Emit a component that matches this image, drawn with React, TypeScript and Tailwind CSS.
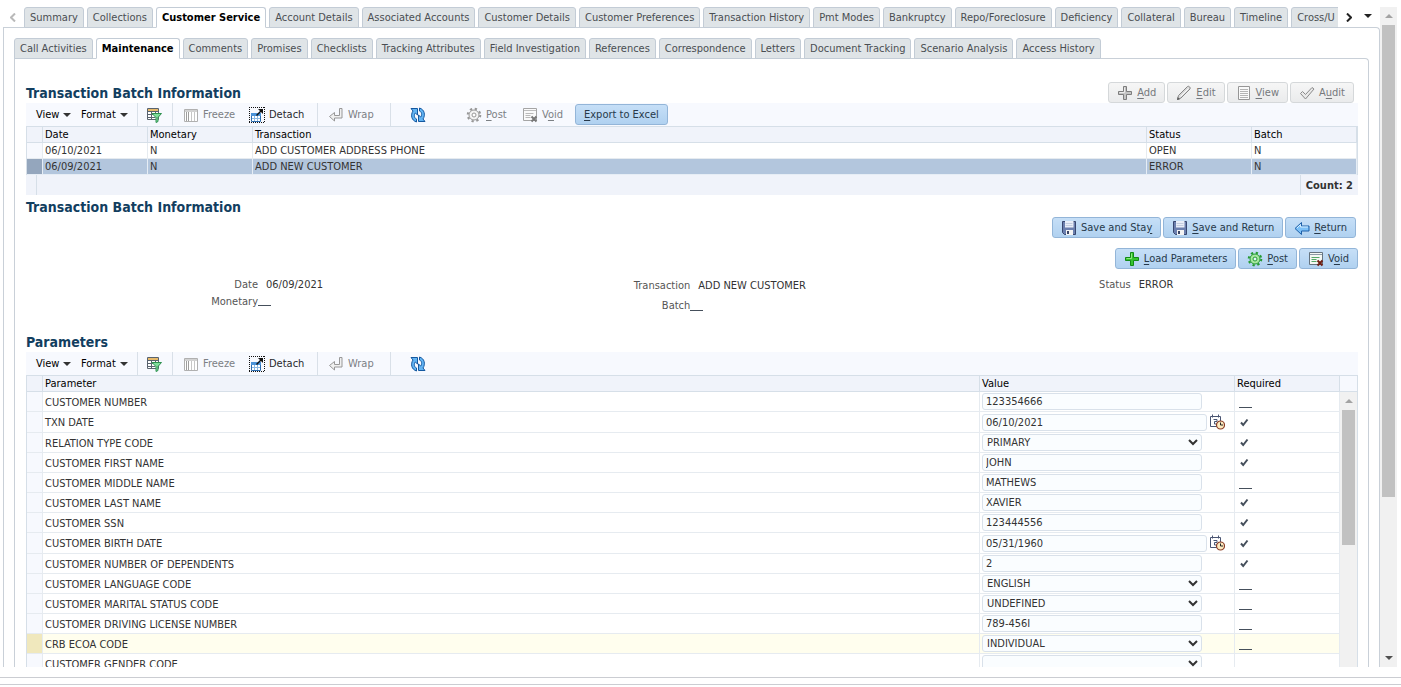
import { ReactNode } from 'react';
import { clsx } from 'clsx';

const mainTabs = [
  'Summary',
  'Collections',
  'Customer Service',
  'Account Details',
  'Associated Accounts',
  'Customer Details',
  'Customer Preferences',
  'Transaction History',
  'Pmt Modes',
  'Bankruptcy',
  'Repo/Foreclosure',
  'Deficiency',
  'Collateral',
  'Bureau',
  'Timeline',
  'Cross/U',
];

const subTabs = [
  'Call Activities',
  'Maintenance',
  'Comments',
  'Promises',
  'Checklists',
  'Tracking Attributes',
  'Field Investigation',
  'References',
  'Correspondence',
  'Letters',
  'Document Tracking',
  'Scenario Analysis',
  'Access History',
];

const batches = [
  { date: '06/10/2021', monetary: 'N', transaction: 'ADD CUSTOMER ADDRESS PHONE', status: 'OPEN', batch: 'N' },
  { date: '06/09/2021', monetary: 'N', transaction: 'ADD NEW CUSTOMER', status: 'ERROR', batch: 'N' },
];

interface Parameter {
  name: string;
  value: string;
  kind: 'text' | 'date' | 'select';
  required: boolean;
}

const parameters: Parameter[] = [
  { name: 'CUSTOMER NUMBER', value: '123354666', kind: 'text', required: false },
  { name: 'TXN DATE', value: '06/10/2021', kind: 'date', required: true },
  { name: 'RELATION TYPE CODE', value: 'PRIMARY', kind: 'select', required: true },
  { name: 'CUSTOMER FIRST NAME', value: 'JOHN', kind: 'text', required: true },
  { name: 'CUSTOMER MIDDLE NAME', value: 'MATHEWS', kind: 'text', required: false },
  { name: 'CUSTOMER LAST NAME', value: 'XAVIER', kind: 'text', required: true },
  { name: 'CUSTOMER SSN', value: '123444556', kind: 'text', required: true },
  { name: 'CUSTOMER BIRTH DATE', value: '05/31/1960', kind: 'date', required: true },
  { name: 'CUSTOMER NUMBER OF DEPENDENTS', value: '2', kind: 'text', required: true },
  { name: 'CUSTOMER LANGUAGE CODE', value: 'ENGLISH', kind: 'select', required: false },
  { name: 'CUSTOMER MARITAL STATUS CODE', value: 'UNDEFINED', kind: 'select', required: false },
  { name: 'CUSTOMER DRIVING LICENSE NUMBER', value: '789-456I', kind: 'text', required: false },
  { name: 'CRB ECOA CODE', value: 'INDIVIDUAL', kind: 'select', required: false },
  { name: 'CUSTOMER GENDER CODE', value: '', kind: 'select', required: false },
];

/* ---------- icons ---------- */

function Icon({ children, className }: { children: ReactNode; className?: string }) {
  return (
    <svg viewBox="0 0 16 16" className={clsx('size-4 shrink-0', className)} fill="none" aria-hidden="true">
      {children}
    </svg>
  );
}

function PlusIcon({ green }: { green?: boolean }) {
  return (
    <Icon>
      <path
        d="M6.5 1.5h3v5h5v3h-5v5h-3v-5h-5v-3h5z"
        fill={green ? '#35c42e' : '#c4c4c4'}
        stroke={green ? '#118a16' : '#7d7d7d'}
      />
      <path d="M7.5 2.5v5h-5" stroke={green ? '#8cec7c' : '#ececec'} />
    </Icon>
  );
}

function PencilIcon() {
  return (
    <Icon>
      <path d="M1.5 14.5l1-4 9-9c1-1 3.5 1 2.5 2.5l-9 9z" fill="#d9d9d9" stroke="#858585" />
      <path d="M4.5 11.5l8-8" stroke="#fafafa" />
      <path d="M1 15l.7-3 2.3 2.3z" fill="#5e5e5e" />
    </Icon>
  );
}

function PageIcon() {
  return (
    <Icon>
      <path d="M2.5 1.5h11v13h-11z" fill="#fafafa" stroke="#969696" />
      <path d="M4 4.5h8M4 6.5h8M4 8.5h8M4 10.5h8M4 12.5h8" stroke="#b4b4b4" />
    </Icon>
  );
}

function AuditIcon() {
  return (
    <Icon>
      <path d="M1.5 8.500l2-2 3 3 6.500-7 2 1.500-8.500 10z" fill="#e9e9e9" stroke="#8a8a8a" strokeLinejoin="round" />
    </Icon>
  );
}

function SaveIcon() {
  return (
    <Icon>
      <path d="M1.5 1.5h13v13h-11l-2-2z" fill="#6b7fae" stroke="#38466f" />
      <path d="M4 1h8.5v6.5H4z" fill="#e9eef8" />
      <path d="M4.5 3.5h7M4.5 5.5h7" stroke="#c3cde0" />
      <path d="M5 10h7v5H5z" fill="#f4f4f4" />
      <path d="M6 11h2v3H6z" fill="#3b4566" />
    </Icon>
  );
}

function ReturnIcon() {
  return (
    <Icon>
      <path d="M1 8.5l6.500-6v3.500h7.500v5H7.500v3.500z" fill="#7cc0f7" stroke="#1d5fa8" strokeLinejoin="round" />
      <path d="M3 8l3.500-3.500V7H14" stroke="#d4edff" />
    </Icon>
  );
}

function GearIcon({ green }: { green?: boolean }) {
  const line = green ? '#259a32' : '#979797';
  return (
    <Icon>
      <circle cx="8" cy="8" r="6.3" stroke={line} strokeWidth="2" strokeDasharray="2.3 2.648" />
      <circle cx="8" cy="8" r="5" fill={green ? '#a8e8a0' : '#f4f4f4'} stroke={line} />
      <circle cx="8" cy="8" r="2" fill={green ? '#e2f3fd' : '#fff'} stroke={line} />
    </Icon>
  );
}

function VoidIcon({ active }: { active?: boolean }) {
  return (
    <Icon>
      <path d="M1.5 1.5h13v12h-13z" fill={active ? '#f4f8f4' : '#fafafa'} stroke={active ? '#65737f' : '#a5a5a5'} />
      <path d="M2 3.5h12" stroke={active ? '#8b9aa6' : '#bdbdbd'} />
      <path d="M3.5 6.5h8M3.5 8.5h5M3.5 10.5h5" stroke={active ? '#55a868' : '#b9b9b9'} />
      <path d="M9.5 9.5l5 5M14.5 9.5l-5 5" stroke={active ? '#6e1f14' : '#777'} strokeWidth="2" />
    </Icon>
  );
}

function QueryIcon() {
  return (
    <Icon>
      <path d="M1.5 1.5h11v11h-11z" fill="#fff" stroke="#59636e" />
      <path d="M2 2h10v2H2z" fill="#e6b96b" />
      <path d="M1.5 4.5h11M1.5 7.5h8M1.5 10.5h8M5.5 4v9M9.5 4v4" stroke="#59636e" />
      <path d="M6 6.5h9.5L12 10.5v4l-2 1v-5z" fill="#7fdc9a" stroke="#2f9150" strokeLinejoin="round" />
    </Icon>
  );
}

function FreezeIcon() {
  return (
    <Icon>
      <path d="M1.5 2.5h13v12h-13z" fill="#fff" stroke="#b0b0b0" />
      <path d="M2 3h12v2H2z" fill="#d2d2d2" />
      <path d="M3.5 5v9M5.5 5v9" stroke="#9d9d9d" />
      <path d="M8.5 5v9M11.5 5v9" stroke="#c6c6c6" />
    </Icon>
  );
}

function DetachIcon() {
  return (
    <Icon>
      <path d="M0 .5h16M0 15.5h16M.5 0v16M15.5 0v16" stroke="#111" strokeDasharray="1 1" />
      <path d="M2.5 6.5h9v8h-9z" fill="#fff" stroke="#2c6cae" />
      <path d="M2 6h10v3H2z" fill="#4b93d9" />
      <path d="M5.5 9v5M8.5 9v5M3 11.5h8" stroke="#8ab8e4" />
      <path d="M7.5 8.5l4.5-4.5" stroke="#111" strokeWidth="1.5" />
      <path d="M9 2h5v5z" fill="#111" />
    </Icon>
  );
}

function WrapIcon() {
  return (
    <Icon>
      <path
        d="M11.5 1.5h2.5v9.5H6.5v3l-5-4.5 5-4v3h5z"
        fill="#f0f0f0"
        stroke="#989898"
        strokeLinejoin="round"
      />
    </Icon>
  );
}

function RefreshIcon() {
  return (
    <Icon>
      <path
        d="M1 1.5h6.5V8L5.3 6C3.8 8 4 11 6.5 12v3C1.5 13.5.3 8 3 4z"
        fill="#62b4f3"
        stroke="#1458a0"
        strokeLinejoin="round"
      />
      <path
        d="M15 14.5H8.5V8l2.2 2C12.2 8 12 5 9.5 4V1c5 1.500 6.200 7 3.500 11z"
        fill="#62b4f3"
        stroke="#1458a0"
        strokeLinejoin="round"
      />
    </Icon>
  );
}

function CalendarIcon() {
  return (
    <Icon>
      <path d="M1.5 2.5h10v10h-10z" fill="#fff" stroke="#4a5572" />
      <path d="M3.5.5v3M9.5.5v3" stroke="#4a5572" />
      <path d="M4.5 5.5h3.5v2H5.500v2.500h3" stroke="#4a5572" />
      <circle cx="11.5" cy="11" r="4" fill="#fdebc0" stroke="#8a3d26" strokeWidth="1.2" />
      <path d="M11.5 8.5V11h2.5" stroke="#222" />
    </Icon>
  );
}

function CheckIcon() {
  return (
    <svg viewBox="0 0 9 9" className="ml-[3px] size-[9px]" role="img" aria-label="Required">
      <path d="M1 4.500l2.200 2.500L7.500 1.500" fill="none" stroke="#454f5b" strokeWidth="2" />
    </svg>
  );
}

function Caret({ className }: { className?: string }) {
  return (
    <svg viewBox="0 0 8 4" className={clsx('h-1 w-2 shrink-0', className)} aria-hidden="true">
      <path d="M0 0h8L4 4z" fill="currentColor" />
    </svg>
  );
}

/* ---------- controls ---------- */

// Label with the access key underlined
function KeyLabel({ text, at = 0 }: { text: string; at?: number }) {
  return (
    <span>
      {text.slice(0, at)}
      <u className="underline-offset-2">{text[at]}</u>
      {text.slice(at + 1)}
    </span>
  );
}

interface ActionButtonProps {
  icon?: ReactNode;
  text: string;
  at?: number;
  disabled?: boolean;
}

function ActionButton({ icon, text, at, disabled }: ActionButtonProps) {
  return (
    <button
      type="button"
      disabled={disabled}
      className={clsx(
        'flex h-[21px] items-center gap-1 rounded-[3px] border px-2 whitespace-nowrap',
        disabled
          ? 'border-[#d5d8da] bg-linear-to-b from-[#f6f6f6] to-[#eaebec] text-[#76797c]'
          : 'border-[#93b5d8] bg-linear-to-b from-[#c6dff7] to-[#b0d1f0] text-[#27394a]'
      )}
    >
      {icon}
      <KeyLabel text={text} at={at} />
    </button>
  );
}

function TabStrip({ tabs, active, label }: { tabs: string[]; active: string; label: string }) {
  return (
    <div role="tablist" aria-label={label} className="flex min-w-0 flex-1 gap-[3px] overflow-hidden">
      {tabs.map((tab) => (
        <button
          key={tab}
          type="button"
          role="tab"
          aria-selected={tab === active}
          className={clsx(
            'h-[21px] shrink-0 rounded-t-[3px] border px-[5px] whitespace-nowrap',
            tab === active
              ? 'border-[#c3ccd6] border-b-white bg-white font-bold text-black'
              : 'border-[#c3ccd6] bg-[#dfe4e7] text-[#4a4e52]'
          )}
        >
          {tab}
        </button>
      ))}
    </div>
  );
}

function Separator() {
  return <span className="h-full w-px bg-[#d9e0e8]" />;
}

function Toolbar({ children }: { children?: ReactNode }) {
  return (
    <div className="flex h-[23px] items-center bg-[#f7f9fe] pl-[10px]">
      <button type="button" className="flex w-[45px] items-center gap-1 text-black">
        View <Caret className="text-[#333]" />
      </button>
      <button type="button" className="flex w-14 items-center gap-1 text-black">
        Format <Caret className="text-[#333]" />
      </button>
      <Separator />
      <button type="button" aria-label="Query by example" className="pr-[10px] pl-2">
        <QueryIcon />
      </button>
      <Separator />
      <button type="button" disabled className="ml-[10px] flex w-[66px] items-center gap-1 text-[#7c8084]">
        <FreezeIcon /> Freeze
      </button>
      <button type="button" className="flex w-[68px] items-center gap-1 text-[#27292c]">
        <DetachIcon /> Detach
      </button>
      <Separator />
      <button type="button" disabled className="ml-[10px] flex w-[62px] items-center gap-1 text-[#7c8084]">
        <WrapIcon /> Wrap
      </button>
      <Separator />
      <button type="button" aria-label="Refresh" className="ml-[19px]">
        <RefreshIcon />
      </button>
      {children}
    </div>
  );
}

function SectionTitle({ children }: { children: ReactNode }) {
  return <h2 className="text-sm leading-5 font-bold text-[#123e5f]">{children}</h2>;
}

function NotSet() {
  return <span className="block h-px w-[13px] bg-[#454f5b]" />;
}

function Field({ label, children, tall }: { label: string; children: ReactNode; tall?: boolean }) {
  return (
    <div className={clsx('flex items-center', tall ? 'h-5' : 'h-[17px]')}>
      <dt className="w-[232px] shrink-0 text-right text-[#555]">{label}</dt>
      <dd className="text-[#333]">{children}</dd>
    </div>
  );
}

function ValueEditor({ param }: { param: Parameter }) {
  const box = 'h-[17px] rounded-[3px] border border-[#d9e1ea] bg-[#fafdff] text-[#333]';
  if (param.kind === 'select') {
    return (
      <span className="relative block w-[220px]">
        <select aria-label={param.name} defaultValue={param.value} className={clsx(box, 'block w-full appearance-none pl-1')}>
          <option>{param.value}</option>
        </select>
        <svg viewBox="0 0 10 7" className="pointer-events-none absolute top-[5px] right-1 h-[7px] w-[10px]">
          <path d="M1 1l4 4 4-4" fill="none" stroke="#333" strokeWidth="2" />
        </svg>
      </span>
    );
  }
  return (
    <span className="flex items-start gap-[2px]">
      <input
        type="text"
        aria-label={param.name}
        defaultValue={param.value}
        className={clsx(box, 'pl-[3px]', param.kind === 'date' ? 'w-[225px]' : 'w-[220px]')}
      />
      {param.kind === 'date' && (
        <button type="button" aria-label={`Select date for ${param.name}`}>
          <CalendarIcon />
        </button>
      )}
    </span>
  );
}

function ParametersTable() {
  const cell = 'border-r border-b border-[#e6ebf0] p-0 pl-[2px]';
  const head = 'h-[17px] border-y border-r border-[#d6dfe8] p-0 pt-px pl-[2px] text-left font-normal text-black';
  return (
    <div className="flex">
      <table className="min-w-0 flex-1 table-fixed border-separate border-spacing-0 border-l border-[#d6dfe8]">
        <colgroup>
          <col className="w-4" />
          <col />
          <col className="w-[255px]" />
          <col className="w-[105px]" />
        </colgroup>
        <thead className="bg-[#f0f3fa]">
          <tr>
            <th className={head} aria-label="Row" />
            <th className={head}>Parameter</th>
            <th className={head}>Value</th>
            <th className={head}>Required</th>
          </tr>
        </thead>
        <tbody>
          {parameters.map((param) => {
            const hovered = param.name === 'CRB ECOA CODE';
            return (
              <tr
                key={param.name}
                className={clsx(param.kind === 'date' ? 'h-[21px]' : 'h-5', hovered && 'bg-[#fffeee]')}
              >
                <td className={clsx(cell, hovered ? 'bg-[#f0e8bd]' : 'bg-[#f7f9fe]')} />
                <td className={cell}>
                  <div className="pt-[2px]">{param.name}</div>
                </td>
                <td className={cell}>
                  <ValueEditor param={param} />
                </td>
                <td className={cell}>
                  {param.required ? (
                    <CheckIcon />
                  ) : (
                    <div className="pt-3 pl-[2px]">
                      <NotSet />
                    </div>
                  )}
                </td>
              </tr>
            );
          })}
        </tbody>
      </table>
      <div className="flex w-[18px] flex-col border-r border-[#d6dfe8]">
        <div className="h-[17px] border-y border-[#d6dfe8] bg-[#f7f9fe]" />
        <div className="flex flex-1 flex-col items-center bg-[#f1f1f1]">
          <Caret className="my-[7px] rotate-180 text-[#a3a3a3]" />
          <div className="h-[135px] w-[13px] bg-[#c1c1c1]" />
        </div>
      </div>
    </div>
  );
}

function BatchTable() {
  const head = 'h-[17px] border-y border-r border-[#d6dfe8] p-0 pt-px pl-[2px] text-left font-normal text-black';
  return (
    <>
      <table className="w-full table-fixed border-separate border-spacing-0 border-x border-[#d6dfe8]">
        <colgroup>
          <col className="w-4" />
          <col className="w-[105px]" />
          <col className="w-[105px]" />
          <col />
          <col className="w-[105px]" />
          <col className="w-[105px]" />
        </colgroup>
        <thead className="bg-[#f0f3fa]">
          <tr>
            <th className={head} aria-label="Row" />
            <th className={head}>Date</th>
            <th className={head}>Monetary</th>
            <th className={head}>Transaction</th>
            <th className={head}>Status</th>
            <th className={head}>Batch</th>
          </tr>
        </thead>
        <tbody>
          {batches.map((row) => {
            const selected = row.status === 'ERROR';
            const cell = clsx(
              'h-4 border-r border-b p-0 pt-px pl-[2px]',
              selected ? 'border-[#e6edf5]' : 'border-[#e6ebf0]'
            );
            return (
              <tr key={row.date} className={clsx(selected && 'bg-[#b3c6dd]')}>
                <td className={clsx(cell, selected ? 'bg-[#94a6bd]' : 'bg-[#f7f9fe]')} />
                <td className={cell}>{row.date}</td>
                <td className={cell}>{row.monetary}</td>
                <td className={cell}>{row.transaction}</td>
                <td className={cell}>{row.status}</td>
                <td className={cell}>{row.batch}</td>
              </tr>
            );
          })}
        </tbody>
      </table>
      <div className="flex h-5 items-stretch bg-[#f0f3fa] pl-[10px]">
        <span className="w-px bg-[#d6dfe8]" />
        <span className="ml-auto flex items-center border-l border-[#d6dfe8] px-[5px] pt-[2px] font-bold">Count: 2</span>
      </div>
    </>
  );
}

function Maintenance() {
  return (
    <div className="pt-[23px] pr-[10px] pl-[11px]">
      <div className="flex items-center justify-between pr-1">
        <SectionTitle>Transaction Batch Information</SectionTitle>
        <div className="flex gap-[2px]">
          <ActionButton icon={<PlusIcon />} text="Add" disabled />
          <ActionButton icon={<PencilIcon />} text="Edit" disabled />
          <ActionButton icon={<PageIcon />} text="View" disabled />
          <ActionButton icon={<AuditIcon />} text="Audit" at={1} disabled />
        </div>
      </div>

      <Toolbar>
        <button type="button" disabled className="ml-10 flex w-14 items-center gap-1 text-[#7c8084]">
          <GearIcon /> <KeyLabel text="Post" />
        </button>
        <button type="button" disabled className="flex w-[53px] items-center gap-1 text-[#7c8084]">
          <VoidIcon /> <KeyLabel text="Void" at={1} />
        </button>
        <ActionButton text="Export to Excel" />
      </Toolbar>
      <BatchTable />

      {/* Selected transaction */}
      <div className="pt-[2px]">
        <SectionTitle>Transaction Batch Information</SectionTitle>
      </div>
      <div className="flex justify-end gap-[2px] pr-[2px]">
        <ActionButton icon={<SaveIcon />} text="Save and Stay" at={12} />
        <ActionButton icon={<SaveIcon />} text="Save and Return" />
        <ActionButton icon={<ReturnIcon />} text="Return" />
      </div>
      <div className="flex justify-end gap-[2px] pt-[10px]">
        <ActionButton icon={<PlusIcon green />} text="Load Parameters" />
        <ActionButton icon={<GearIcon green />} text="Post" />
        <ActionButton icon={<VoidIcon active />} text="Void" at={1} />
      </div>
      <dl className="grid grid-cols-[432fr_440fr_459fr] pt-[7px] pb-4">
        <div>
          <Field label="Date">
            <span className="pl-2">06/09/2021</span>
          </Field>
          <Field label="Monetary">
            <div className="pt-2">
              <NotSet />
            </div>
          </Field>
        </div>
        <div>
          <Field label="Transaction" tall>
            <span className="pl-2">ADD NEW CUSTOMER</span>
          </Field>
          <Field label="Batch" tall>
            <div className="pt-2">
              <NotSet />
            </div>
          </Field>
        </div>
        <div>
          <Field label="Status">
            <span className="pl-2">ERROR</span>
          </Field>
        </div>
      </dl>

      <SectionTitle>Parameters</SectionTitle>
      <Toolbar />
      <ParametersTable />
    </div>
  );
}

export default function App() {
  return (
    <div className="flex h-screen flex-col overflow-hidden bg-white font-['DejaVu_Sans_Condensed','Noto_Sans',sans-serif] text-[11px] leading-[14px] text-[#333]">
      <main className="flex min-h-0 flex-1 overflow-hidden pt-[7px] pr-1 pl-[3px]">
        <div className="flex min-w-0 flex-1 flex-col">
          <div className="z-10 -mb-px flex shrink-0">
            <button type="button" aria-label="Previous tabs" className="flex w-[21px] items-center pl-[7px]">
              <svg viewBox="0 0 6 9" className="h-[9px] w-[6px]">
                <path d="M5 .5l-4 4 4 4" fill="none" stroke="#b9b9b9" strokeWidth="2" />
              </svg>
            </button>
            <TabStrip tabs={mainTabs} active="Customer Service" label="Account" />
            <button type="button" aria-label="Next tabs" className="flex w-6 items-center pl-2">
              <svg viewBox="0 0 6 9" className="h-[9px] w-[6px]">
                <path d="M1 .5l4 4-4 4" fill="none" stroke="#222" strokeWidth="2" />
              </svg>
            </button>
            <button type="button" aria-label="All tabs" className="flex w-[18px] items-center pb-1 pl-[2px]">
              <Caret className="text-[#222]" />
            </button>
          </div>
          <div className="flex min-h-0 flex-1 flex-col rounded-tr-sm border border-b-0 border-[#c9d0d8] px-[10px] pt-[10px]">
            <div className="z-10 -mb-px flex shrink-0">
              <TabStrip tabs={subTabs} active="Maintenance" label="Customer Service" />
            </div>
            <div className="min-h-0 flex-1 overflow-hidden rounded-tr-sm border border-b-0 border-[#c9d0d8]">
              <Maintenance />
            </div>
          </div>
        </div>

        {/* Page scrollbar */}
        <div className="flex w-[17px] flex-col items-center bg-[#f1f1f1]">
          <Caret className="my-[7px] rotate-180 text-[#a3a3a3]" />
          <div className="h-[472px] w-[13px] bg-[#c1c1c1]" />
          <Caret className="mt-auto mb-[7px] text-[#505050]" />
        </div>
      </main>
      <footer className="h-5 pt-[10px]">
        <div className="h-2 border-y border-[#cbcdd2]" />
      </footer>
    </div>
  );
}
